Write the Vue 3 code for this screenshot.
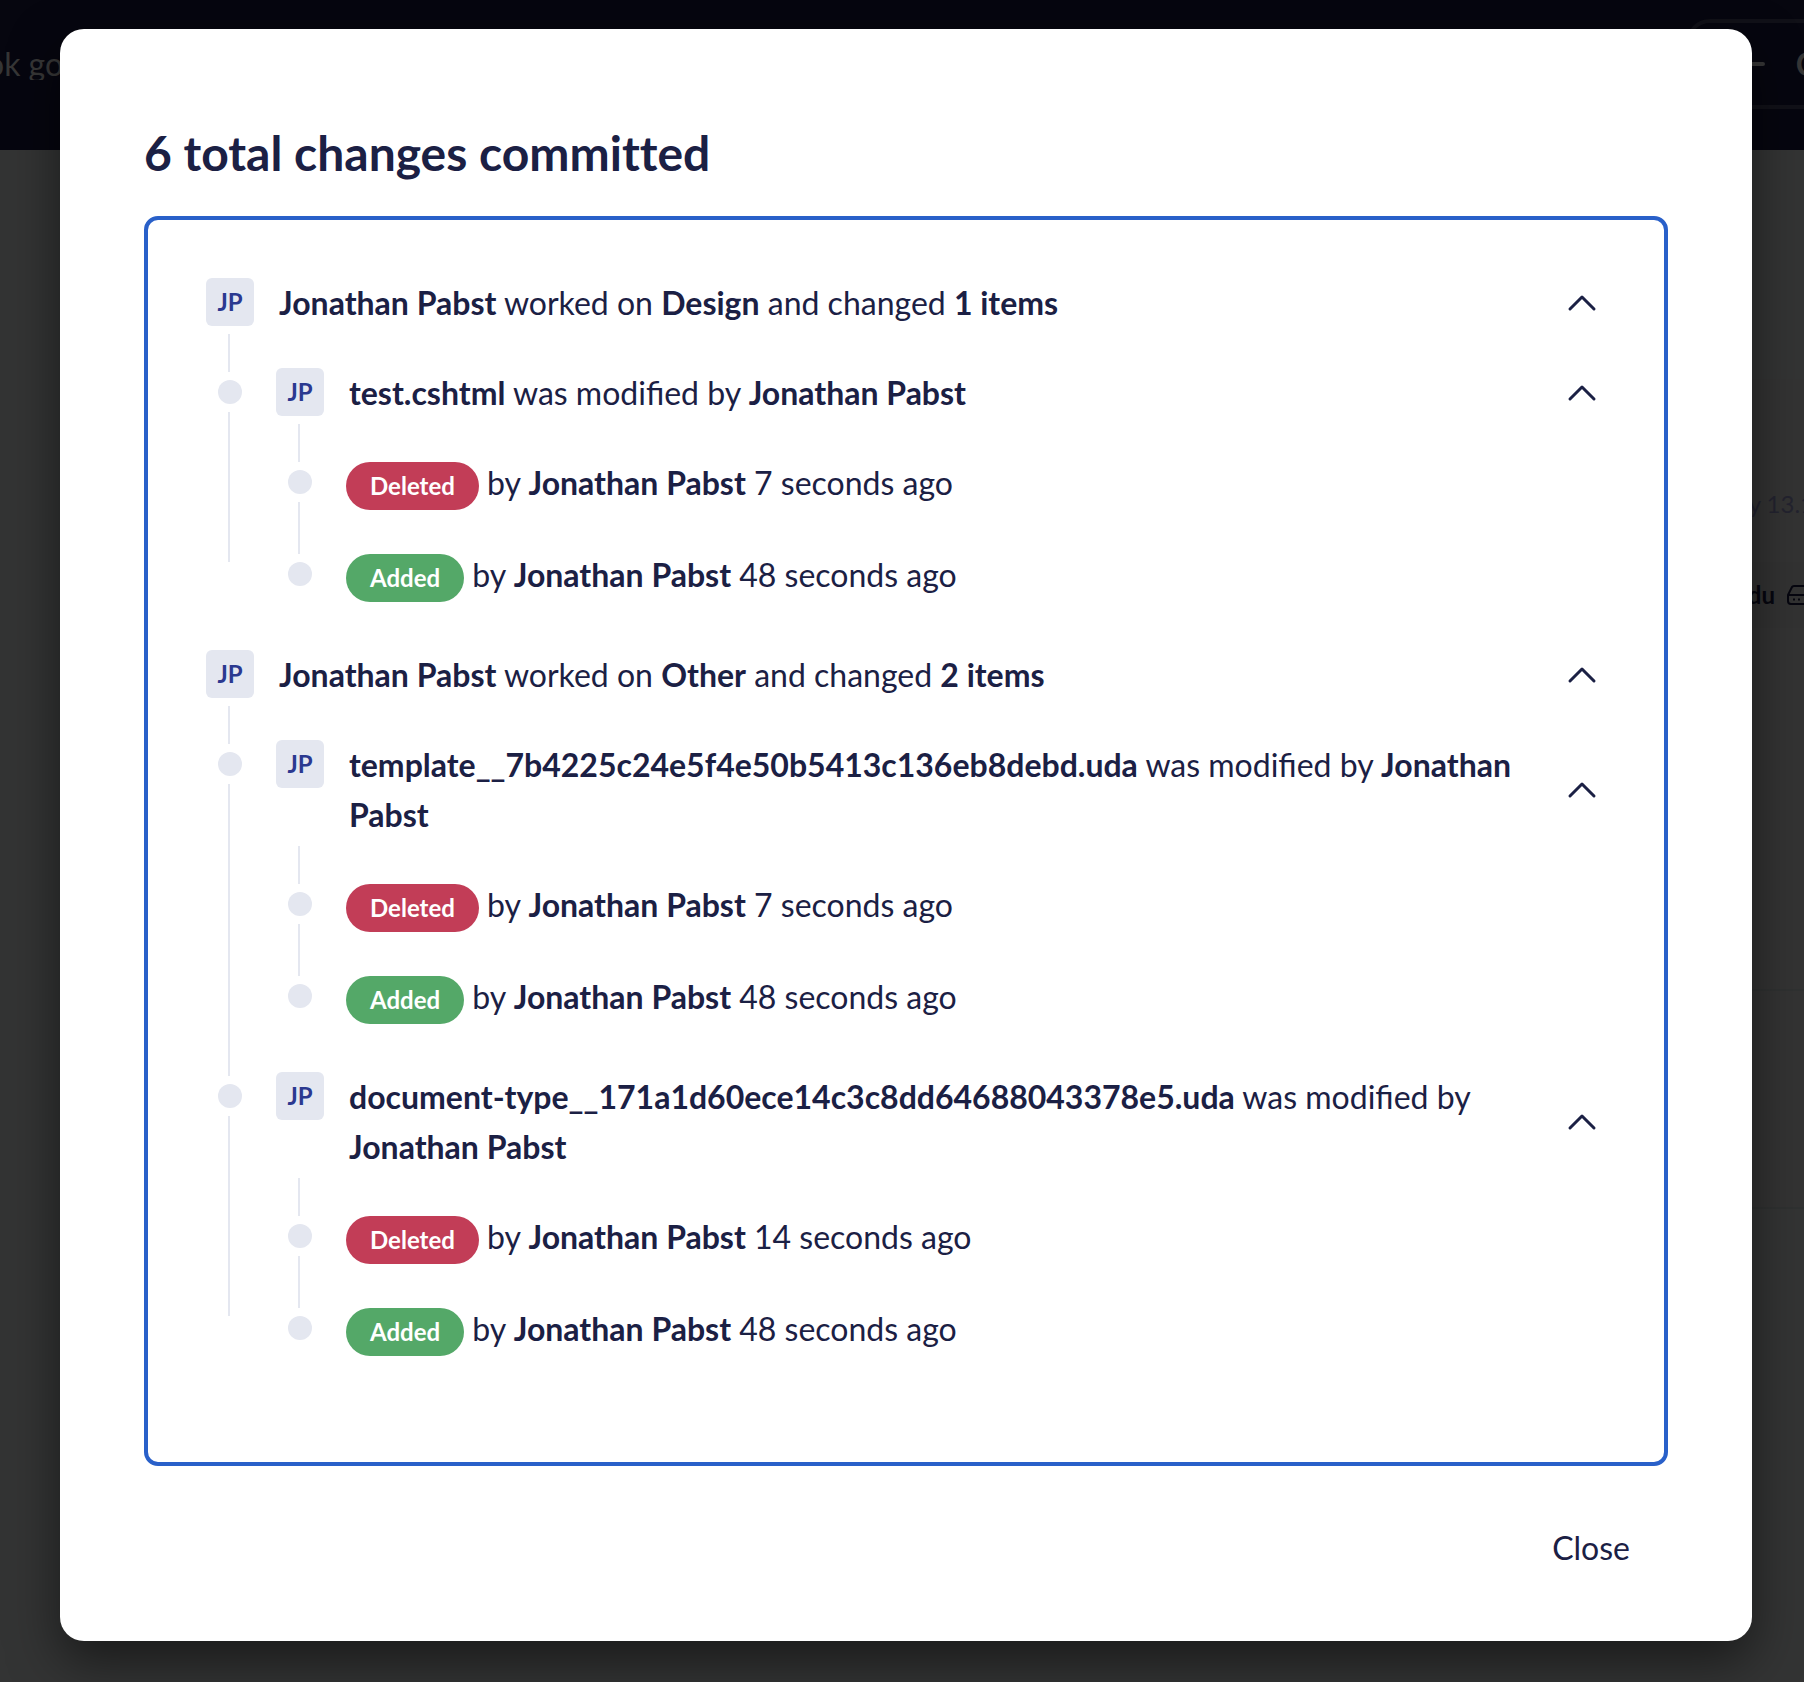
<script setup>
import { reactive } from 'vue'

const author = 'Jonathan Pabst'
const groups = reactive([
  {
    area: 'Design',
    open: true,
    files: [
      {
        name: 'test.cshtml',
        open: true,
        entries: [
          { kind: 'Deleted', when: '7 seconds ago' },
          { kind: 'Added', when: '48 seconds ago' },
        ],
      },
    ],
  },
  {
    area: 'Other',
    open: true,
    files: [
      {
        name: 'template__7b4225c24e5f4e50b5413c136eb8debd.uda',
        open: true,
        entries: [
          { kind: 'Deleted', when: '7 seconds ago' },
          { kind: 'Added', when: '48 seconds ago' },
        ],
      },
      {
        name: 'document-type__171a1d60ece14c3c8dd64688043378e5.uda',
        open: true,
        entries: [
          { kind: 'Deleted', when: '14 seconds ago' },
          { kind: 'Added', when: '48 seconds ago' },
        ],
      },
    ],
  },
])
</script>

<template>
  <div class="page">
    <div class="backdrop" aria-hidden="true">
      <div class="topbar">
        <span class="topbar-text">ok go</span>
        <span class="topbar-action">
          <svg class="dash" viewBox="0 0 32 32"><path d="M3 16H29" /></svg>
          <span>C</span>
        </span>
      </div>
      <div class="band"></div>
      <div class="card">
        <p class="date">y 13.1</p>
        <p class="server">
          <span>du</span>
          <svg viewBox="0 0 24 20">
            <path d="M1 10 5 2Q5.500 1 7 1H17Q18.500 1 19 2L23 10V16Q23 19 20 19H4Q1 19 1 16ZM1 10H23M6 14.500H8M11 14.500H13" />
          </svg>
        </p>
      </div>
      <div class="card-lower"></div>
    </div>

    <section class="modal" role="dialog" aria-labelledby="modal-title">
      <h1 id="modal-title">6 total changes committed</h1>

      <div class="panel">
        <article v-for="group in groups" :key="group.area">
          <header class="head">
            <span class="avatar">JP</span>
            <p class="title">
              <b>{{ author }}</b> worked on <b>{{ group.area }}</b> and changed <b>{{ group.files.length }} items</b>
            </p>
            <button class="toggle" type="button" aria-label="Toggle group" :aria-expanded="group.open" @click="group.open = !group.open">
              <svg viewBox="0 0 32 32"><path d="M4 22 16 10 28 22" /></svg>
            </button>
          </header>
          <div class="connector"></div>

          <template v-if="group.open">
            <div v-for="file in group.files" :key="file.name" class="node">
              <div class="rail"><i class="dot"></i><i class="line"></i></div>
              <div class="file">
                <header class="head">
                  <span class="avatar">JP</span>
                  <p class="title"><b>{{ file.name }}</b> was modified by <b>{{ author }}</b></p>
                  <button class="toggle" type="button" aria-label="Toggle file" :aria-expanded="file.open" @click="file.open = !file.open">
                    <svg viewBox="0 0 32 32"><path d="M4 22 16 10 28 22" /></svg>
                  </button>
                </header>
                <div class="connector"></div>
                <template v-if="file.open">
                  <div v-for="entry in file.entries" :key="entry.kind" class="node entry">
                    <div class="rail"><i class="dot"></i><i class="line"></i></div>
                    <p><span class="pill" :class="entry.kind.toLowerCase()">{{ entry.kind }}</span> by <b>{{ author }}</b> {{ entry.when }}</p>
                  </div>
                </template>
              </div>
            </div>
          </template>
        </article>
      </div>

      <footer class="actions">
        <button class="close" type="button">Close</button>
      </footer>
    </section>
  </div>
</template>

<style>
body {
  margin: 0;
  background: #333434;
}
</style>

<style scoped>
.page {
  display: grid;
  min-height: 100vh;
  overflow: hidden;
  font-family: Lato, "Liberation Sans", sans-serif;
  font-size: 32px;
  line-height: 50px;
  color: #1b2044;
}

.page > * {
  grid-area: 1 / 1;
  min-width: 0;
}

p,
h1 {
  margin: 0;
}

button {
  border: 0;
  background: none;
  font: inherit;
  color: inherit;
  cursor: pointer;
}

/* Dimmed page behind the dialog */
.backdrop {
  display: flex;
  flex-direction: column;
  background: #333434;
}

.topbar {
  display: flex;
  justify-content: space-between;
  align-items: flex-start;
  height: 150px;
  background: #06060f;
  color: #363636;
}

.topbar-text {
  height: 41px;
  margin: 39px 0 0 -14px;
  overflow: hidden;
}

.topbar-action {
  display: flex;
  align-items: center;
  gap: 30px;
  box-sizing: border-box;
  height: 90px;
  margin: 19px -37px 0 0;
  padding: 0 20px 0 44px;
  border: 4px solid #111118;
  border-radius: 24px;
  font-weight: bold;
}

.dash {
  width: 32px;
  fill: none;
  stroke: #363636;
  stroke-width: 4;
  stroke-linecap: round;
}

.band {
  height: 229px;
}

.card,
.card-lower {
  margin-left: 120px;
  background: #333333;
}

.card {
  display: flex;
  flex-direction: column;
  height: 610px;
  border-bottom: 2px solid #2f3131;
  font-size: 24px;
  white-space: nowrap;
}

.date {
  margin: 100px -10px 0 auto;
  color: #23232f;
}

.server {
  display: flex;
  align-items: center;
  justify-content: flex-end;
  gap: 12px;
  height: 66px;
  margin: 33px -7px 0 0;
  background: #323232;
  color: #06060f;
  font-weight: bold;
}

.server svg {
  width: 24px;
  fill: none;
  stroke: #06060f;
  stroke-width: 2;
}

.card-lower {
  height: 216px;
  border-bottom: 2px solid #2f3131;
}

/* Dialog */
.modal {
  align-self: start;
  margin: 29px 52px 41px 60px;
  padding: 84px 84px 52px;
  border-radius: 24px;
  background: #ffffff;
  box-shadow: 0 20px 50px rgba(0, 0, 0, 0.5);
}

h1 {
  margin-bottom: 23px;
  font-size: 48px;
  font-weight: bold;
  font-variant-ligatures: none;
  line-height: 80px;
}

.panel {
  padding: 58px;
  border: 4px solid #2960c9;
  border-radius: 14px;
}

.head {
  display: flex;
  align-items: flex-start;
}

.avatar {
  flex: none;
  width: 48px;
  margin-right: 25px;
  border-radius: 6px;
  background: #e4e7f0;
  color: #2b3990;
  font-size: 24px;
  font-weight: bold;
  line-height: 48px;
  text-align: center;
}

.title {
  flex: 1;
  padding-right: 16px;
}

.toggle {
  align-self: center;
  display: grid;
  place-items: center;
  width: 48px;
  height: 48px;
  padding: 0;
}

.toggle svg {
  width: 32px;
  height: 32px;
  fill: none;
  stroke: currentColor;
  stroke-width: 3;
  stroke-linecap: round;
  stroke-linejoin: round;
}

/* The vertical rules reach 4px into the next row, up to 8px above its dot */
.connector {
  width: 2px;
  height: 38px;
  margin: 6px 0 -4px 22px;
  background: #e4e7f0;
}

.node {
  display: flex;
  gap: 22px;
}

.rail {
  flex: none;
  display: flex;
  flex-direction: column;
  width: 48px;
}

.dot {
  width: 24px;
  height: 24px;
  margin: 12px 0 0 12px;
  border-radius: 50%;
  background: #e4e7f0;
}

.line {
  flex: 1;
  width: 2px;
  margin: 8px 0 -4px 22px;
  background: #e4e7f0;
}

.node:last-child > .rail > .line {
  margin-bottom: 88px;
}

.file {
  flex: 1;
  min-width: 0;
  padding-bottom: 8px;
}

.entry {
  height: 92px;
}

.entry:last-child > .rail > .line {
  display: none;
}

.pill {
  display: inline-block;
  padding: 0 24px;
  border-radius: 24px;
  color: #ffffff;
  font-size: 24px;
  font-weight: bold;
  line-height: 48px;
}

.deleted {
  background: #c23d57;
}

.added {
  background: #54a868;
}

.actions {
  display: flex;
  justify-content: flex-end;
  margin-top: 41px;
}

.close {
  padding: 16px 38px;
}
</style>
